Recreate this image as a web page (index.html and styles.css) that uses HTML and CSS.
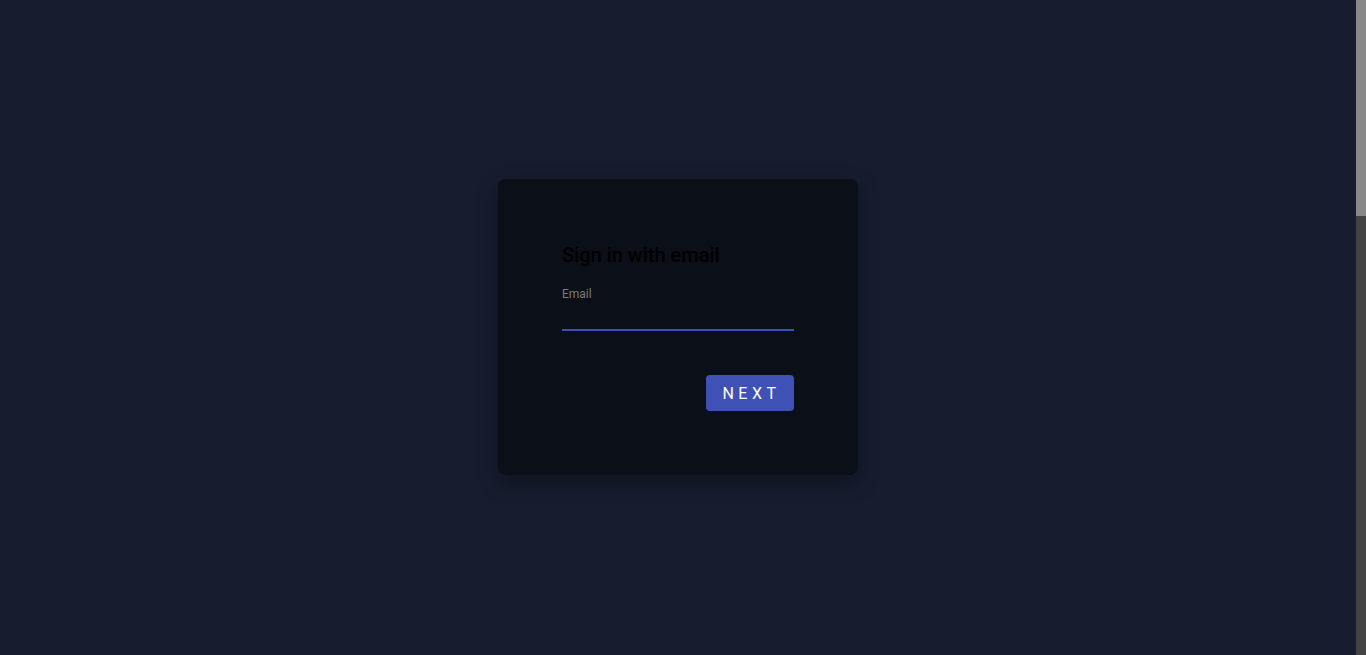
FILE: index.html
```html
<!DOCTYPE html>
<html lang="en">
<head>
<meta charset="utf-8">
<title>Sign in</title>
<link rel="stylesheet" href="styles.css">
</head>
<body>
<div class="window">
  <main class="stage">
    <form class="card">
      <h1 class="title">Sign in with email</h1>
      <label class="field">
        <span class="field-label">Email</span>
        <input class="field-input" type="email">
      </label>
      <div class="actions">
        <button type="button" class="btn-next">NEXT</button>
      </div>
    </form>
  </main>
  <div class="scrollbar" aria-hidden="true"><div class="scroll-thumb"></div></div>
</div>
</body>
</html>
```

FILE: styles.css
```css
html, body {
  margin: 0;
  padding: 0;
  height: 100%;
  overflow: hidden;
  background: #161d2f;
  font-family: Roboto, "Liberation Sans", sans-serif;
}

.window {
  height: 100vh;
  display: flex;
}

.stage {
  flex: 1;
  display: flex;
  align-items: center;
  justify-content: center;
  padding-bottom: 1px;
}

.scrollbar {
  width: 10px;
  background: #444444;
}

.scroll-thumb {
  height: 216px;
  background: #888888;
}

.card {
  width: 360px;
  height: 296px;
  box-sizing: border-box;
  padding: 64px 64px 0;
  background: #0b0f17;
  border-radius: 8px;
  box-shadow: 0 8px 20px rgba(0, 0, 0, 0.35);
  display: flex;
  flex-direction: column;
}

.title {
  margin: 0;
  font-size: 20px;
  font-weight: 500;
  line-height: 24px;
  color: #000000;
}

.field {
  display: flex;
  flex-direction: column;
  margin-top: 20px;
}

.field-label {
  font-size: 12px;
  line-height: 14px;
  color: #7a7a7a;
}

.field-input {
  margin: 0;
  padding: 0;
  height: 28px;
  border: none;
  border-bottom: 2px solid #3f51b5;
  background: transparent;
  outline: none;
  color: #fff;
  font: inherit;
}

.actions {
  display: flex;
  justify-content: flex-end;
  margin-top: 44px;
}

.btn-next {
  height: 36px;
  width: 88px;
  padding: 0 0 0 3px;
  border: none;
  border-radius: 4px;
  background: #3f51b5;
  color: #ffffff;
  font-family: Roboto, "Liberation Sans", sans-serif;
  font-size: 16px;
  font-weight: 400;
  letter-spacing: 4.5px;
}
```
